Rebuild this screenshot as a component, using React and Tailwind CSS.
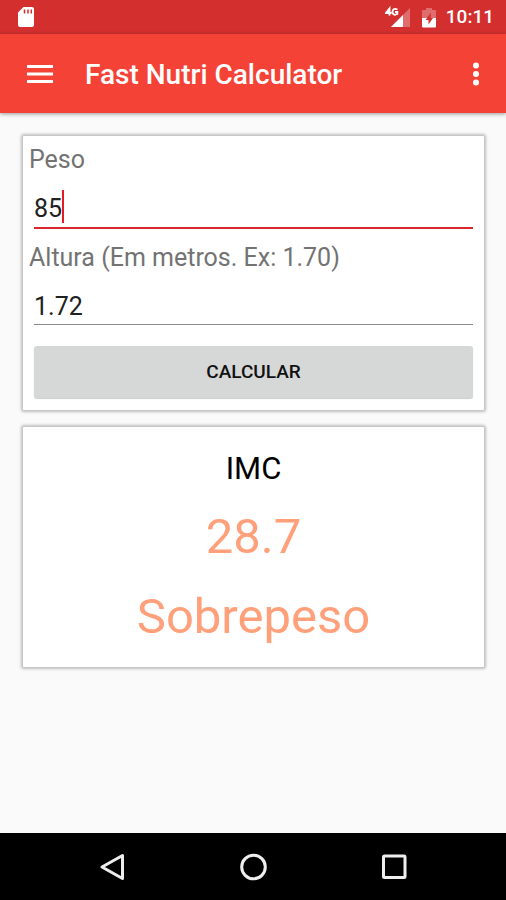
import React, { useState } from "react";

const classify = (imc) => {
  if (imc < 18.5) return "Abaixo do peso";
  if (imc < 25) return "Peso normal";
  if (imc < 30) return "Sobrepeso";
  return "Obesidade";
};

const StatusBar = () => (
  <div className="flex h-[34px] items-center bg-[#d32f2f] pr-3 pl-[17px] text-white">
    <svg viewBox="0 0 18 22" className="h-[22px] w-[18px]" aria-hidden="true">
      <path d="M6.5 1H15a2 2 0 0 1 2 2v16a2 2 0 0 1-2 2H3a2 2 0 0 1-2-2V6.5z" fill="currentColor" />
      <path d="M7.5 3.5v4M11 3.500v4M14.300 3.500v4" stroke="#d32f2f" strokeWidth="1.500" />
    </svg>
    <div className="ml-auto flex items-center">
      <svg viewBox="0 0 26 24" className="h-6 w-[26px]" aria-hidden="true">
        <path d="M25 3v19H6z" fill="#fff" fillOpacity="0.3" />
        <path d="M18 10v12H6z" fill="currentColor" />
        <path d="M4.500 10.500V3.500L1 8h5.500M12.500 4.500c-3.500-1.500-5 0-5 2.500s2 3.500 4.800 2V7H10" fill="none" stroke="currentColor" strokeWidth="1.900" />
      </svg>
      <svg viewBox="0 0 14 22" className="ml-[11px] h-[22px] w-[14px]" aria-hidden="true">
        <path d="M4 2h6v2h3a1 1 0 0 1 1 1v7H0V5a1 1 0 0 1 1-1h3z" fill="#fff" fillOpacity="0.3" />
        <path d="M0 12h14v8.500a1 1 0 0 1-1 1H1a1 1 0 0 1-1-1z" fill="currentColor" />
        <path d="M9 6.500L3.500 14H6.500v4.500L11 12H8.500z" fill="#d32f2f" />
      </svg>
      <span className="ml-[10px] text-[19px] leading-6 font-medium">10:11</span>
    </div>
  </div>
);

const AppBar = () => (
  <header className="flex h-[79px] items-center bg-[#f44336] pr-[17px] pl-[23px] text-white shadow-[0_1px_4px_rgba(0,0,0,0.4)]">
    <button type="button" aria-label="Menu" className="p-1">
      <svg viewBox="0 0 26 20" className="h-5 w-[26px]">
        <path d="M0 2.500h26M0 10h26M0 17.500h26" stroke="currentColor" strokeWidth="3" />
      </svg>
    </button>
    <h1 className="ml-7 pt-0.5 text-[28px] leading-8 font-medium">Fast Nutri Calculator</h1>
    <button type="button" aria-label="Mais opções" className="ml-auto p-2">
      <svg viewBox="0 0 10 26" className="h-[26px] w-[10px]" fill="currentColor">
        <circle cx="5" cy="4.500" r="3" />
        <circle cx="5" cy="13" r="3" />
        <circle cx="5" cy="21.500" r="3" />
      </svg>
    </button>
  </header>
);

const NavBar = () => (
  <nav className="flex h-[67px] items-center justify-center gap-[113px] bg-black text-[#eee]">
    <button type="button" aria-label="Voltar">
      <svg viewBox="0 0 28 28" className="size-7" fill="none" stroke="currentColor" strokeWidth="3">
        <path d="M24.500 2.500v23L4 14z" strokeLinejoin="round" />
      </svg>
    </button>
    <button type="button" aria-label="Início">
      <svg viewBox="0 0 28 28" className="size-7" fill="none" stroke="currentColor" strokeWidth="3">
        <circle cx="14.500" cy="14" r="11.800" />
      </svg>
    </button>
    <button type="button" aria-label="Recentes">
      <svg viewBox="0 0 28 28" className="size-7" fill="none" stroke="currentColor" strokeWidth="3">
        <rect x="3.500" y="3" width="21.500" height="21.500" rx="1" />
      </svg>
    </button>
  </nav>
);

export default function App() {
  const [peso, setPeso] = useState("85");
  const [altura, setAltura] = useState("1.72");
  const [imc, setImc] = useState(85 / (1.72 * 1.72));

  const handleSubmit = (e) => {
    e.preventDefault();
    const result = Number(peso) / (Number(altura) * Number(altura));
    if (Number.isFinite(result)) setImc(result);
  };

  return (
    <div className="flex min-h-screen flex-col bg-[#fafafa] font-[Roboto,sans-serif]">
      <StatusBar />
      <AppBar />

      <main className="flex flex-grow flex-col gap-[17px] pt-[23px] pr-[22px] pl-[23px]">
        {/* Form */}
        <form
          onSubmit={handleSubmit}
          className="flex flex-col rounded-[1px] bg-white px-[6px] pt-[9px] pb-3 text-[25px] leading-[30px] shadow-[0_0_3px_2px_rgba(0,0,0,0.24)]"
        >
          <label htmlFor="peso" className="text-[#737373]">Peso</label>
          <div className="relative mx-[5px] mt-[15px] flex">
            <input
              id="peso"
              inputMode="decimal"
              value={peso}
              onChange={(e) => setPeso(e.target.value)}
              className="peer h-[39px] w-full border-b-2 border-[#d9282b] text-[#212121] caret-[#e51c23] outline-none"
            />
            <span className="absolute top-0 left-7 h-[33px] w-[2px] bg-[#e51c23] peer-focus:hidden" />
          </div>
          <label htmlFor="altura" className="mt-[14px] text-[#737373]">Altura (Em metros. Ex: 1.70)</label>
          <input
            id="altura"
            inputMode="decimal"
            value={altura}
            onChange={(e) => setAltura(e.target.value)}
            className="mx-[5px] mt-[15px] h-[37px] border-b border-[#8a8a8a] text-[#212121] caret-[#e51c23] outline-none"
          />
          <button
            type="submit"
            className="mx-[5px] mt-[21px] h-[52px] rounded-[3px] bg-[#d6d7d7] text-[19px] font-medium text-[#111] uppercase shadow-[0_1px_1px_rgba(0,0,0,0.2)]"
          >
            Calcular
          </button>
        </form>

        {/* Result */}
        <section className="rounded-[1px] bg-white pt-[14px] pb-[10px] text-center shadow-[0_0_3px_2px_rgba(0,0,0,0.24)]">
          <h2 className="text-[31px] leading-[56px] text-black">IMC</h2>
          <p className="text-[49px] leading-[80px] text-[#ffa07a]">{imc.toFixed(1)}</p>
          <p className="text-[49px] leading-[80px] text-[#ffa07a]">{classify(imc)}</p>
        </section>
      </main>

      <NavBar />
    </div>
  );
}
